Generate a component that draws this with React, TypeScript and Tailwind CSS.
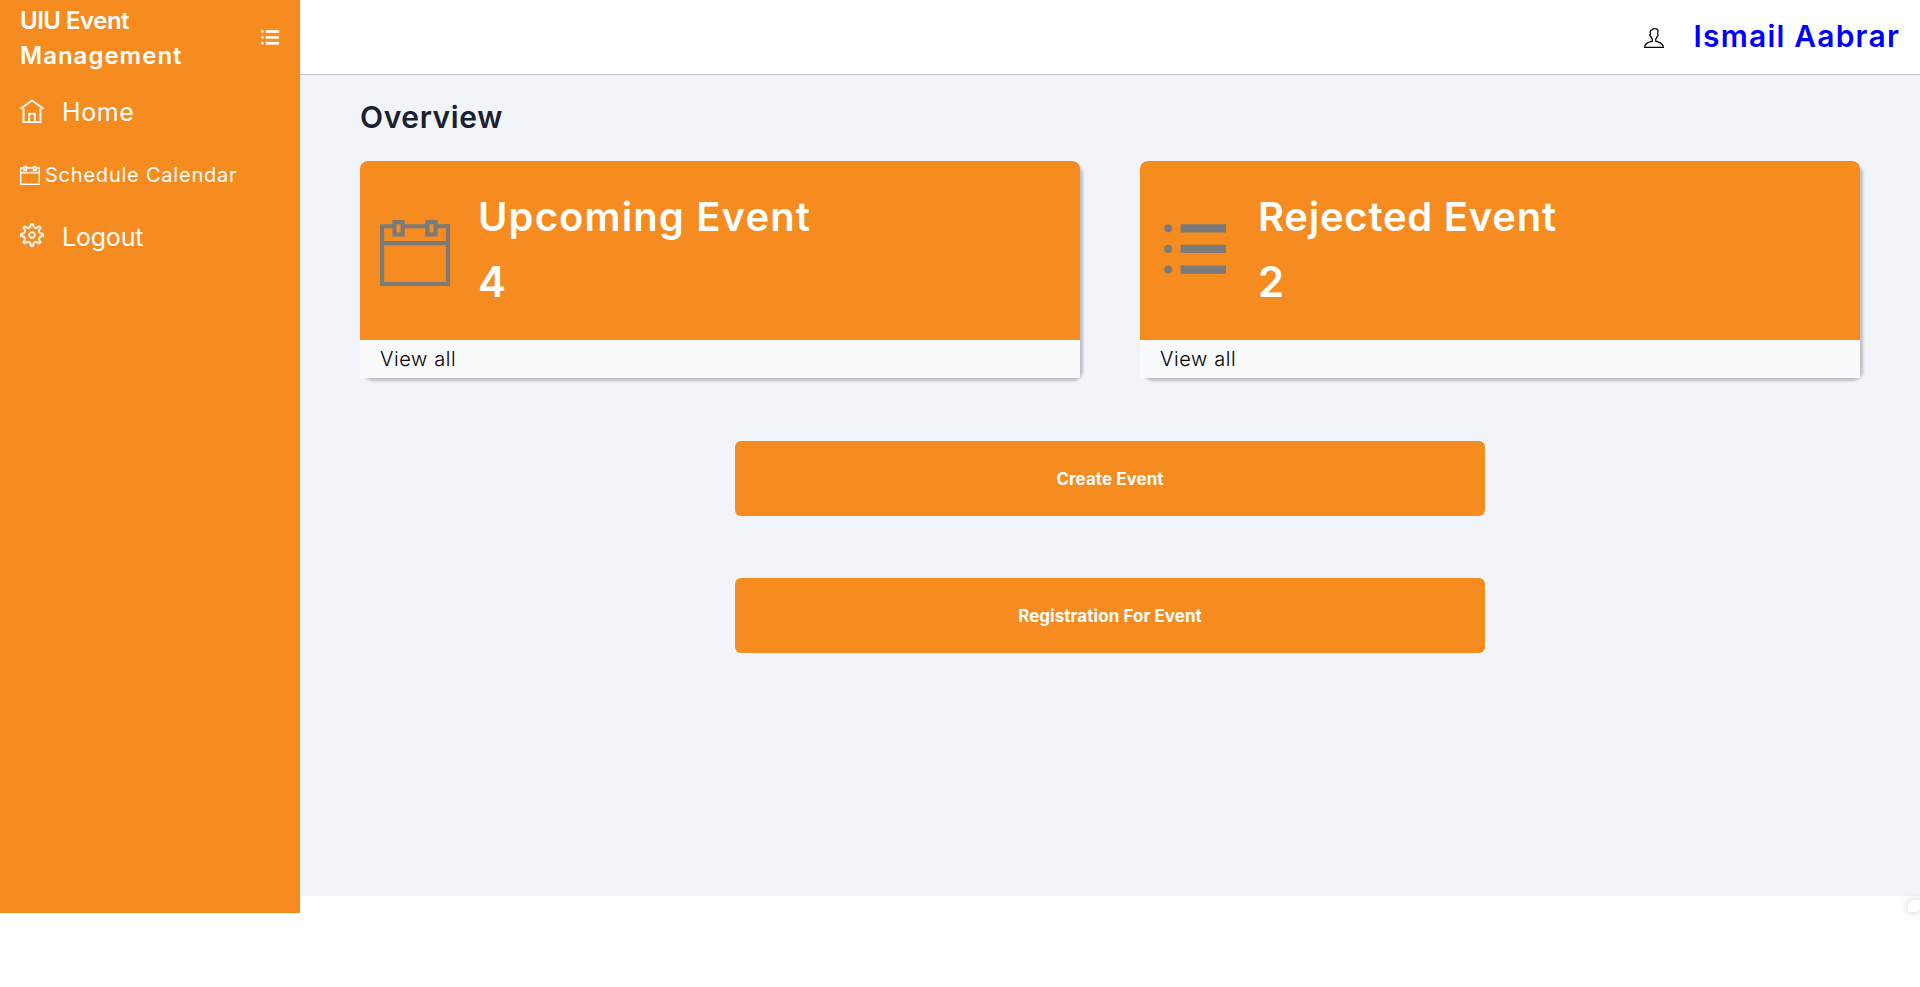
import type { ReactNode } from "react";
import { TfiHome, TfiCalendar, TfiSettings, TfiUser, TfiMenuAlt } from "react-icons/tfi";

type StatCardProps = {
  icon: ReactNode;
  title: string;
  titleClass: string;
  value: number;
};

function StatCard({ icon, title, titleClass, value }: StatCardProps) {
  return (
    <article className="w-[720px] rounded-[10px] shadow-[3px_3px_3px_rgba(0,0,0,0.22)]">
      <div className="flex h-[179px] items-center gap-[28px] rounded-t-[8px] bg-[#f68b1f] px-5">
        <span className="pt-px text-[#7a7a7a]">{icon}</span>
        <div className="-mt-[3px] font-semibold text-white">
          <h3 className={`text-[40px] leading-[65px] ${titleClass}`}>{title}</h3>
          <p className="text-[42px] leading-[65px]">{value}</p>
        </div>
      </div>
      <a href="#" className="flex h-[38px] items-center bg-[#f9fafc] px-5 text-[20px] font-light tracking-[0.58px] text-black">
        View all
      </a>
    </article>
  );
}

function ActionButton({ children }: { children: ReactNode }) {
  return (
    <button className="h-[75px] w-[750px] rounded-[6px] bg-[#f68b1f] pt-[2px] text-[17px] font-bold tracking-[0.05px] text-white">
      {children}
    </button>
  );
}

export default function App() {
  return (
    <div className="flex h-[987px] w-[1920px] items-start overflow-hidden bg-white font-['Inter',sans-serif] whitespace-nowrap">
      <aside className="h-[913px] w-[300px] shrink-0 bg-[#f68b1f] text-white">
        <div className="flex h-[75px] items-center justify-between px-5">
          <h1 className="pt-px text-[24px] leading-[35px] font-semibold">
            <span className="block tracking-[-0.5px]">UIU Event</span>
            <span className="block tracking-[1px]">Management</span>
          </h1>
          <TfiMenuAlt size={20} strokeWidth={0.3} />
        </div>
        <nav className="flex flex-col pt-[6px]">
          <a href="#" className="flex h-[62px] items-center gap-[18px] px-5 text-[25px] tracking-[0.6px]">
            <TfiHome size={24} strokeWidth={0.35} className="mb-[2px]" />
            <span className="pt-[2px]">Home</span>
          </a>
          <a href="#" className="flex h-[63px] items-center gap-[5px] px-5 text-[20px] tracking-[0.78px]">
            <TfiCalendar size={20} strokeWidth={0.35} />
            Schedule Calendar
          </a>
          <a href="#" className="flex h-[62px] items-center gap-[18px] px-5 text-[25px] tracking-[-0.2px]">
            <TfiSettings size={24} strokeWidth={0.35} className="mb-[5px]" />
            <span className="pt-[2px]">Logout</span>
          </a>
        </nav>
      </aside>

      <div className="flex h-[912px] grow flex-col">
        <header className="flex h-[75px] shrink-0 items-center justify-end gap-[30px] border-b border-[#c8c9cc] bg-white px-5">
          <TfiUser size={20} className="mt-[2px] text-black" />
          <span className="-mt-[2px] text-[30px] font-semibold tracking-[1.2px] text-[#0000ff]">Ismail Aabrar</span>
        </header>

        <main className="flex grow flex-col bg-[#f1f4f9] px-[60px]">
          <h2 className="h-[86px] text-[30px] leading-[85px] font-semibold tracking-[0.6px] text-[#1b1f30]">Overview</h2>
          <section className="flex justify-between">
            <StatCard icon={<TfiCalendar size={70} />} title="Upcoming Event" titleClass="tracking-[1.12px]" value={4} />
            <StatCard icon={<TfiMenuAlt size={70} />} title="Rejected Event" titleClass="tracking-[0.75px]" value={2} />
          </section>
          <section className="flex flex-col items-center gap-[62px] pt-[63px]">
            <ActionButton>Create Event</ActionButton>
            <ActionButton>Registration For Event</ActionButton>
          </section>
        </main>

        <div className="flex shrink-0 justify-end pt-[4px]">
          <div className="size-3 rounded-tl-[6px] rounded-br-[5px] bg-white shadow-[0_0_8px_rgba(0,0,0,0.22)]" />
        </div>
      </div>
    </div>
  );
}
